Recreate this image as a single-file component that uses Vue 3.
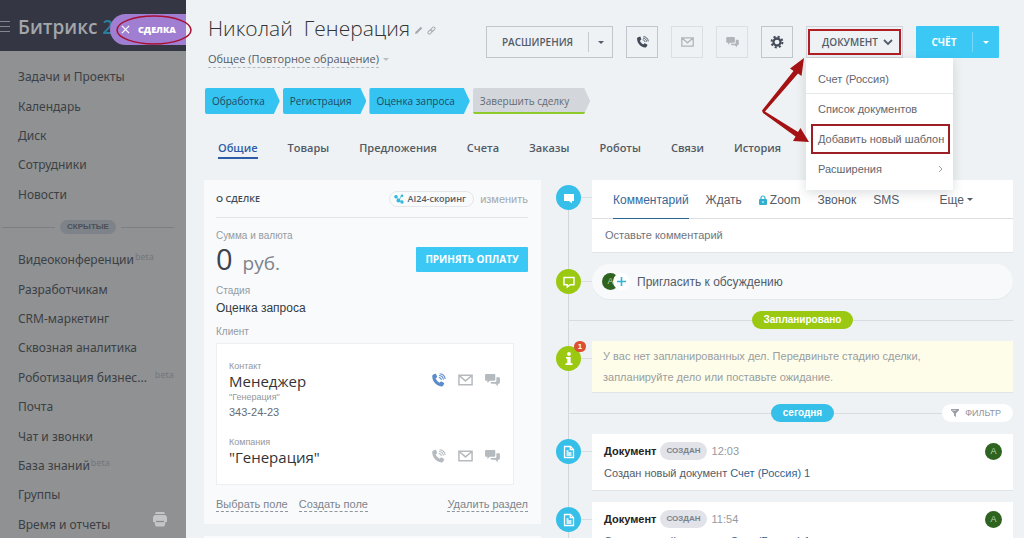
<script setup>
const menuTop = ['Задачи и Проекты', 'Календарь', 'Диск', 'Сотрудники', 'Новости']
const menuHidden = [
  { name: 'Видеоконференции', beta: true },
  { name: 'Разработчикам' },
  { name: 'CRM-маркетинг' },
  { name: 'Сквозная аналитика' },
  { name: 'Роботизация бизнес...', beta: true, wide: true },
  { name: 'Почта' },
  { name: 'Чат и звонки' },
  { name: 'База знаний', beta: true },
  { name: 'Группы' },
  { name: 'Время и отчеты' },
]
const stages = ['Обработка', 'Регистрация', 'Оценка запроса']
const tabs = ['Общие', 'Товары', 'Предложения', 'Счета', 'Заказы', 'Роботы', 'Связи', 'История']
const docs = ['12:03', '11:54']
</script>

<template>
  <svg class="defs" aria-hidden="true">
    <symbol id="i-phone" viewBox="0 0 16 16">
      <path d="M2.6 1.6 4.6 .8c.4-.1.8 0 .9.4l1 2.600c.1.4 0 .7-.3.900l-1.300 1c.7 2 2.200 3.700 4.100 4.700l1.200-1.200c.3-.3.600-.3 1-.1l2.500 1.300c.4.2.5.6.3 1l-1 1.900c-.4.700-1.100 1.100-1.900 1C5.500 13.600 1.400 8.900 1.300 3.500c0-.8.500-1.600 1.300-1.900z" fill="currentColor"/>
      <path d="M8.300 4.700c1.500.1 2.600 1.200 2.800 2.700M8.700 2.600c2.500.2 4.300 2.100 4.500 4.500M9.200.7c3.200.2 5.700 2.600 5.900 5.800" fill="none" stroke="currentColor" stroke-width="1.1"/>
    </symbol>
    <symbol id="i-mail" viewBox="0 0 16 12">
      <path d="M1 1h14v10H1zM1.500 1.500 8 7l6.500-5.500" fill="none" stroke="currentColor" stroke-width="1.600"/>
    </symbol>
    <symbol id="i-chat" viewBox="0 0 16 14">
      <path d="M1.200 0h8.600c.7 0 1.200.5 1.200 1.200v5c0 .7-.5 1.200-1.200 1.200H5L2.500 9.800V7.400H1.200C.5 7.400 0 6.900 0 6.200v-5C0 .5.500 0 1.200 0z" fill="currentColor"/>
      <path d="M12.200 3.600h2.600c.7 0 1.200.5 1.200 1.200v4.400c0 .7-.5 1.200-1.200 1.200h-1.100v2.800l-2.800-2.800H7.200c-.7 0-1.200-.5-1.200-1.200v-.600h5c.7 0 1.200-.5 1.200-1.200z" fill="currentColor"/>
    </symbol>
  </svg>

  <div class="page">
    <aside class="side">
      <header class="brand">
        <button class="burger" aria-label="Меню"><i></i><i></i><i></i></button>
        <span class="logo">Битрикс <b>24</b></span>
        <button class="deal-tab">
          <svg viewBox="0 0 10 10"><path d="M1 1l8 8M9 1 1 9" stroke="#fff" stroke-width="1.400"/></svg>
          <span>СДЕЛКА</span>
          <svg class="ring" viewBox="0 0 76 30"><ellipse cx="38" cy="15" rx="37" ry="14" fill="none" stroke="#a80f32" stroke-width="1.500"/></svg>
        </button>
      </header>
      <nav class="nav">
        <ul class="list five">
          <li v-for="m in menuTop" :key="m"><a href="#">{{ m }}</a></li>
        </ul>
        <div class="hidden-sep"><span>СКРЫТЫЕ</span></div>
        <ul class="list ten">
          <li v-for="m in menuHidden" :key="m.name">
            <a href="#">{{ m.name }}</a><sup v-if="m.beta" :class="{ wide: m.wide }">beta</sup>
          </li>
        </ul>
      </nav>
      <button class="print" aria-label="Печать">
        <svg viewBox="0 0 14 15"><path d="M3 0h8l1 2H2zM1.500 3h11L14 5v5h-1.500l-1 4.500h-9l-1-4.500H0V5z" fill="#c3c5c7"/><path d="M3 9.500h8" stroke="#8b8d90" stroke-width="1.300"/></svg>
      </button>
    </aside>

    <main class="main">
      <header class="top">
        <div class="heading">
          <h1>Николай&nbsp; Генерация
            <svg class="pen" viewBox="0 0 10 10"><path d="M1 9l.8-2.600L7.500.8l1.700 1.700-5.700 5.700z" fill="#a5abb0"/></svg>
            <svg class="chain" viewBox="0 0 10 10" fill="none" stroke="#a5abb0" stroke-width="1.100"><rect x="-2.700" y="-1.600" width="5.400" height="3.200" rx="1.600" transform="translate(6.600 3.400) rotate(-45)"/><rect x="-2.700" y="-1.600" width="5.400" height="3.200" rx="1.600" transform="translate(3.400 6.600) rotate(-45)"/></svg>
          </h1>
          <button class="funnel"><span>Общее (Повторное обращение)</span><i class="caret"></i></button>
        </div>
        <div class="actions">
          <div class="split">
            <button class="label">РАСШИРЕНИЯ</button>
            <button class="more" aria-label="Ещё"><i class="caret"></i></button>
          </div>
          <button class="sq" aria-label="Позвонить"><svg class="ic"><use href="#i-phone"/></svg></button>
          <button class="sq dim" aria-label="Письмо"><svg class="mail"><use href="#i-mail"/></svg></button>
          <button class="sq dim" aria-label="Чат"><svg class="chat"><use href="#i-chat"/></svg></button>
          <button class="sq" aria-label="Настройки">
            <svg class="gear" viewBox="-8 -8 16 16" fill="none" stroke="currentColor"><circle r="4" stroke-width="2.600"/><circle r="6.200" stroke-width="2.200" stroke-dasharray="2.435 2.435"/></svg>
          </button>
          <div class="doc">
            <button class="doc-btn">ДОКУМЕНТ
              <svg viewBox="0 0 10 7"><path d="M1 1l4 4 4-4" fill="none" stroke="currentColor" stroke-width="1.800"/></svg>
            </button>
            <div class="menu">
              <a href="#" class="lined">Счет (Россия)</a>
              <a href="#">Список документов</a>
              <a href="#" class="marked">Добавить новый шаблон</a>
              <a href="#" class="sub">Расширения
                <svg viewBox="0 0 5 8"><path d="M1 1l3 3-3 3" fill="none" stroke="#9aa0a6"/></svg>
              </a>
            </div>
            <svg class="arrows" viewBox="0 0 50 92">
              <path d="M1 54.500 32.500 15 29 12.500 43 2 40.500 20 37 17.500 4 55.500 37 76l2.500-4L48 86l-16-1 2.500-4.500L2 57z" fill="#a51214"/>
            </svg>
          </div>
          <div class="split blue">
            <button class="label">СЧЁТ</button>
            <button class="more" aria-label="Ещё"><i class="caret"></i></button>
          </div>
        </div>
      </header>

      <div class="stages">
        <button v-for="s in stages" :key="s" class="stage">{{ s }}</button>
        <button class="stage final">Завершить сделку</button>
      </div>

      <nav class="tabs">
        <a v-for="(t, i) in tabs" :key="t" href="#" :class="{ on: i === 0 }">{{ t }}</a>
      </nav>

      <div class="body">
        <div class="left">
          <section class="card about">
            <div class="about-head">
              <h2>О СДЕЛКЕ</h2>
              <button class="ai">
                <svg viewBox="0 0 10 10" fill="#2fb9dc"><path d="M2.500 3 4.500 7M4.500 7 8 7.500M7.500 1.500 4.500 7" stroke="#2fb9dc" stroke-width=".7"/><circle cx="2" cy="2.800" r="1.800"/><circle cx="4.500" cy="6.500" r="2"/><circle cx="8" cy="8" r="1.700"/><circle cx="8" cy="1.800" r="1.300"/></svg>
                AI24-скоринг
              </button>
              <button class="edit">изменить</button>
            </div>
            <div class="cap sum-cap">Сумма и валюта</div>
            <div class="sum">
              <span class="num">0</span><span class="cur">руб.</span>
              <button class="pay">ПРИНЯТЬ ОПЛАТУ</button>
            </div>
            <div class="cap stage-cap">Стадия</div>
            <div class="val">Оценка запроса</div>
            <div class="cap client-cap">Клиент</div>
            <div class="client">
              <div class="person">
                <div>
                  <div class="mini">Контакт</div>
                  <div class="name">Менеджер</div>
                  <div class="mini org">"Генерация"</div>
                  <div class="phone">343-24-23</div>
                </div>
                <div class="acts">
                  <button class="call" aria-label="Позвонить"><svg class="ic"><use href="#i-phone"/></svg></button>
                  <button aria-label="Письмо"><svg class="mail"><use href="#i-mail"/></svg></button>
                  <button aria-label="Чат"><svg class="chat"><use href="#i-chat"/></svg></button>
                </div>
              </div>
              <div class="person">
                <div>
                  <div class="mini">Компания</div>
                  <div class="name">"Генерация"</div>
                </div>
                <div class="acts">
                  <button aria-label="Позвонить"><svg class="ic"><use href="#i-phone"/></svg></button>
                  <button aria-label="Письмо"><svg class="mail"><use href="#i-mail"/></svg></button>
                  <button aria-label="Чат"><svg class="chat"><use href="#i-chat"/></svg></button>
                </div>
              </div>
            </div>
            <div class="foot">
              <a href="#">Выбрать поле</a><a href="#">Создать поле</a><a href="#" class="end">Удалить раздел</a>
            </div>
          </section>
          <section class="card next"></section>
        </div>

        <div class="timeline">
          <div class="row">
            <span class="dot"><svg viewBox="0 0 12 12"><path d="M1 2h10v7H9v2.500L6 9H1z" fill="#fff"/></svg></span>
            <section class="box editor">
              <div class="etabs">
                <a href="#" class="on">Комментарий</a>
                <a href="#">Ждать</a>
                <a href="#"><svg viewBox="0 0 8 10"><path d="M2 5V3a2 2 0 0 1 4 0v2" fill="none" stroke="#30b0cf" stroke-width="1.200"/><rect y="4" width="8" height="6" rx="1" fill="#30b0cf"/><path d="M4 6v2" stroke="#fff"/></svg>Zoom</a>
                <a href="#">Звонок</a>
                <a href="#">SMS</a>
                <a href="#" class="last">Еще<i class="caret"></i></a>
              </div>
              <input class="comment" type="text" placeholder="Оставьте комментарий" aria-label="Комментарий">
            </section>
          </div>
          <div class="row">
            <span class="dot green"><svg viewBox="0 0 12 12"><path d="M1 1.500h10v7.300H7L4.300 11V8.800H1z" fill="none" stroke="#fff" stroke-width="1.400"/></svg></span>
            <button class="invite">
              <span class="ava">A</span>
              <span class="plus"><svg viewBox="0 0 10 10"><path d="M5 0v10M0 5h10" stroke="#30b4d8" stroke-width="1.800"/></svg></span>
              Пригласить к обсуждению
            </button>
          </div>
          <div class="sep"><span class="pill green">Запланировано</span></div>
          <div class="row">
            <span class="dot green">
              <svg viewBox="0 0 12 14" class="info"><circle cx="6" cy="1.900" r="1.900" fill="#fff"/><path d="M3 5h4.700v6.300H9.500V13h-7v-1.700h1.800V6.700H3z" fill="#fff"/></svg>
              <em>1</em>
            </span>
            <section class="box warn">У вас нет запланированных дел. Передвиньте стадию сделки, запланируйте дело или поставьте ожидание.</section>
          </div>
          <div class="sep">
            <span class="pill">сегодня</span>
            <button class="filter"><svg viewBox="0 0 9 9"><path d="M0 0h9v1.300L5.500 5v4L3.500 7.500V5L0 1.300z" fill="#959ca4"/><path d="M1.500 1.500h4" stroke="#fff" stroke-width=".7"/></svg>ФИЛЬТР</button>
          </div>
          <div v-for="d in docs" :key="d" class="row">
            <span class="dot"><svg viewBox="0 0 12 12" fill="none" stroke="#fff" stroke-width="1.300"><path d="M1.500 .5h6L10.500 3.500v8h-9zM7.300 .5v3.200h3.200M3.500 5h2M3.500 7h5M3.500 9h5"/></svg></span>
            <section class="box entry">
              <div class="entry-head">
                <b>Документ</b><span class="tag">СОЗДАН</span><time>{{ d }}</time><span class="ava">A</span>
              </div>
              <p>Создан новый документ <a href="#">Счет (Россия) 1</a></p>
            </section>
          </div>
        </div>
      </div>
    </main>
  </div>
</template>

<style>
body { overflow: hidden; background: #eef2f4; }
</style>

<style scoped>
* { box-sizing: border-box; }
button { font: inherit; color: inherit; background: none; border: 0; padding: 0; margin: 0; cursor: pointer; }
a { color: inherit; text-decoration: none; }
ul, h1, h2, p { margin: 0; padding: 0; list-style: none; font-weight: 400; }
svg { display: block; flex: none; overflow: visible; }
.defs { position: absolute; width: 0; height: 0; }
.page { display: flex; height: 100vh; overflow: hidden; font-family: "Liberation Sans", Arial, sans-serif; font-size: 12px; color: #535c69; }
.caret { display: inline-block; border: 3px solid transparent; border-top-color: currentColor; border-bottom: 0; }
.ic { width: 15px; height: 15px; }
.mail { width: 15px; height: 12px; }
.chat { width: 15px; height: 13px; }

.side { position: relative; z-index: 2; flex: none; width: 186px; background: #8f9193; color: #3c3f44; font-family: "Open Sans", sans-serif; }
.brand { display: flex; align-items: center; height: 51px; background: #343743; padding-top: 2px; }
.burger { width: 10px; display: grid; gap: 4px; }
.burger i { height: 1px; background: #83868d; }
.logo { margin-left: 8px; font-size: 19px; line-height: 26px; font-weight: 600; color: #a2a5aa; white-space: nowrap; }
.logo b { color: #2a7f9b; font-weight: 600; }
.deal-tab { position: absolute; right: 0; top: 14px; display: flex; align-items: center; gap: 8px; width: 76px; height: 31px; padding-left: 11px; border-radius: 16px 0 0 16px; background: #a07fd2; color: #fff; font-size: 9px; font-weight: 800; }
.deal-tab svg { width: 9px; height: 9px; }
.deal-tab .ring { position: absolute; left: 6px; top: 1px; width: 76px; height: 30px; }
.nav { padding-top: 11px; }
.list { display: grid; grid-auto-rows: 1fr; padding-left: 18px; font-family: "Noto Sans", sans-serif; font-size: 12px; }
.five { height: 147px; }
.ten { height: 294px; }
.list li { display: flex; align-items: center; white-space: nowrap; }
.list sup { align-self: flex-start; font-size: 9px; line-height: 14px; margin: 5px 0 0 1px; color: #74777b; }
.list sup.wide { margin-left: 8px; }
.hidden-sep { display: flex; align-items: center; gap: 5px; height: 36px; padding: 0 12px 0 2px; }
.hidden-sep::before, .hidden-sep::after { content: ""; flex: 1; height: 1px; background: #7b7e82; }
.hidden-sep span { padding: 0 7px; border-radius: 7px; background: #7e8389; font: 700 8px/14px "Liberation Sans", sans-serif; color: #4b4f57; }
.print { position: absolute; left: 153px; bottom: 11px; }
.print svg { width: 14px; height: 15px; }

.main { flex: 1; min-width: 0; background: #eef2f4; }
.top { display: flex; justify-content: space-between; height: 88px; padding: 14px 25px 0 22px; }
.heading { white-space: nowrap; font-family: "Open Sans", sans-serif; }
h1 { display: flex; align-items: center; font-size: 21px; line-height: 28px; font-weight: 300; color: #333; }
h1 svg { width: 9px; height: 9px; margin: 4px 0 0 4px; }
.funnel { display: flex; align-items: center; gap: 4px; margin-top: 8px; font-size: 11px; line-height: 17px; }
.funnel span { border-bottom: 1px dashed #b5babf; }
.funnel .caret { color: #b9bec3; }
.actions { display: flex; gap: 13px; margin-top: 12px; height: 32px; font: 600 10px/30px "Open Sans", sans-serif; }
.split { display: flex; align-items: center; width: 127px; border: 1px solid #c1c6ca; }
.split .label { flex: 1; line-height: 30px; }
.split .more { width: 24px; height: 20px; border-left: 1px solid #c6cbcf; display: grid; place-items: center; }
.split.blue { width: 83px; border: 0; border-radius: 1px; background: #3bc8f5; color: #fff; font-weight: 700; }
.split.blue .more { width: 27px; border-color: #74dafa; }
.sq { width: 32px; border: 1px solid #c1c6ca; display: grid; place-items: center; color: #424b57; }
.sq.dim { border-color: #dcdfe2; color: #b0b5ba; }
.sq .mail { width: 13px; height: 10px; }
.sq .chat { width: 13px; height: 11px; }
.sq .ic { width: 13px; height: 13px; }
.gear { width: 14px; height: 14px; }
.doc { position: relative; z-index: 3; width: 97px; }
.doc-btn { position: relative; display: flex; align-items: center; justify-content: center; gap: 5px; width: 100%; height: 32px; padding-left: 6px; border: 1px solid #d0d4d8; }
.doc-btn svg { width: 10px; height: 7px; }
.doc-btn::after { content: ""; position: absolute; inset: 2px 1px; border: 2px solid #b11e23; }
.menu { position: absolute; top: 32px; left: 0; width: 147px; padding: 6px 0; background: #fff; box-shadow: 0 3px 10px rgba(80, 90, 100, .2); font: 11px/30px "Liberation Sans", sans-serif; color: #5f666f; }
.menu a { position: relative; display: flex; align-items: center; justify-content: space-between; height: 30px; padding: 0 10px 0 12px; white-space: nowrap; }
.menu .lined { border-bottom: 1px solid #e5e8ea; }
.menu .marked::after { content: ""; position: absolute; inset: 0 3px 0 5px; border: 2px solid #9c1f26; }
.menu .sub svg { width: 5px; height: 8px; }
.arrows { position: absolute; left: -45px; top: 30px; width: 50px; height: 92px; }

.stages { display: flex; gap: 3px; padding-left: 19px; font: 500 10px/26px "Open Sans", sans-serif; color: #1d4b62; }
.stage { height: 26px; padding: 0 15px 0 7px; background: #35c3f1; border-radius: 2px; clip-path: polygon(0 0, calc(100% - 6px) 0, 100% 50%, calc(100% - 6px) 100%, 0 100%); }
.stage.final { padding-right: 21px; background: linear-gradient(#d3d6da 0 24px, #8fca2b 24px); color: #646b74; }
.tabs { display: flex; gap: 30px; padding: 23px 0 0 32px; font: 600 11px/21px "Open Sans", sans-serif; color: #525a65; }
.tabs a { height: 22px; }
.tabs .on { color: #2d5ca8; border-bottom: 2px solid #2d5ca8; }

.body { display: grid; grid-template-columns: 337fr 457fr; gap: 15px; padding: 21px 11px 0 18px; }
.card { background: #f9fafb; }
.left { display: grid; gap: 12px; align-content: start; }
.next { height: 120px; }
.about { padding: 0 13px 12px 12px; }
.about-head { display: flex; align-items: center; height: 38px; border-bottom: 1px solid #e2e5e8; }
h2 { flex: 1; font: 600 9px/16px "Open Sans", sans-serif; color: #414852; }
.ai { display: flex; align-items: center; gap: 4px; height: 16px; padding: 0 7px 0 4px; border: 1px solid #e3e7ea; border-radius: 8px; font: 600 9px/14px "Open Sans", sans-serif; }
.ai svg { width: 10px; height: 10px; }
.edit { margin-left: 6px; font-size: 11px; color: #a3a8ae; }
.cap { font-size: 10px; line-height: 14px; color: #949ba3; }
.sum-cap { padding-top: 11px; }
.sum { display: flex; align-items: baseline; height: 40px; font-family: "Open Sans", sans-serif; color: #3c434d; line-height: 32px; }
.num { font-size: 29px; }
.cur { margin-left: 10px; font-size: 19px; color: #7b828b; }
.pay { align-self: flex-start; margin: 4px 0 0 auto; width: 112px; height: 25px; border-radius: 1px; background: #3bc8f5; color: #fff; font-size: 10px; line-height: 25px; font-weight: 700; }
.stage-cap { padding-top: 1px; }
.val { margin: 2px 0 9px; font-size: 12px; line-height: 16px; color: #333a43; }
.client { margin: 4px 14px 0 0; height: 142px; padding: 16px 13px 0 12px; background: #fff; border: 1px solid #edf0f2; }
.person { display: flex; justify-content: space-between; }
.person + .person { margin-top: 16px; }
.mini { font-size: 9px; line-height: 12px; color: #9298a0; }
.name { font: 15px/18px "Open Sans", sans-serif; color: #333; }
.org { line-height: 14px; }
.phone { font-size: 11px; line-height: 16px; color: #666d76; }
.acts { display: flex; gap: 12px; height: 16px; margin-top: 12px; align-items: center; color: #b5babf; }
.acts .call { color: #5a8ccb; }
.foot { display: flex; gap: 11px; margin-top: 13px; font-size: 11px; line-height: 13px; color: #7d848c; }
.foot a { border-bottom: 1px dashed #8f959c; }
.foot .end { margin-left: auto; }

.timeline { position: relative; display: grid; gap: 12px; align-content: start; }
.timeline::before { content: ""; position: absolute; left: 12px; top: 12px; bottom: 0; width: 1px; background: #d3d7db; }
.row { position: relative; display: grid; grid-template-columns: 36px minmax(0, 1fr); align-items: start; }
.row::before { content: ""; position: absolute; left: 25px; top: 17px; width: 11px; height: 1px; background: #d9dde0; }
.dot { position: relative; display: grid; place-items: center; width: 25px; height: 25px; margin-top: 5px; border-radius: 50%; background: #36bfe8; }
.dot svg { width: 12px; height: 12px; }
.dot .info { width: 12px; height: 14px; }
.dot.green { background: #9bc810; }
.dot em { position: absolute; top: -5px; right: -5px; width: 12px; height: 11px; border-radius: 6px; background: #dc4f31; color: #fff; font: 700 8px/11px "Liberation Sans", sans-serif; text-align: center; }
.box { background: #fff; box-shadow: 0 1px 0 #e2e5e8; }
.editor { height: 72px; }
.etabs { display: flex; gap: 17px; height: 39px; padding: 0 40px 0 21px; border-bottom: 1px solid #dcdfe2; line-height: 40px; }
.etabs a { display: flex; align-items: center; gap: 3px; height: 39px; }
.etabs svg { width: 8px; height: 10px; }
.etabs .on { color: #35699b; box-shadow: inset 0 -1px 0 #2a668d; }
.etabs .last { margin-left: auto; }
.comment { display: block; width: 100%; height: 31px; padding: 0 13px; border: 0; background: none; font: 11px/30px "Liberation Sans", sans-serif; }
.comment::placeholder { color: #6f757d; opacity: 1; }
.invite { display: flex; align-items: center; height: 35px; padding-left: 10px; border-radius: 18px; background: #f7f9fa; box-shadow: 0 1px 0 #e4e8ea; font-size: 12px; }
.ava { display: grid; place-items: center; width: 17px; height: 17px; border-radius: 50%; background: #2f6420; color: #b6d6a6; font: 9px/17px "Liberation Sans", sans-serif; }
.plus { display: grid; place-items: center; width: 17px; height: 17px; margin: 0 7px 0 -6px; border-radius: 50%; background: #fff; }
.plus svg { width: 9px; height: 9px; }
.sep { position: relative; display: flex; justify-content: center; height: 18px; padding-left: 36px; }
.sep::before { content: ""; position: absolute; left: 13px; right: 0; top: 9px; height: 1px; background: #d8dce0; }
.pill { position: relative; padding: 0 12px; border-radius: 9px; background: #36bfe8; color: #fff; font-size: 10px; line-height: 18px; font-weight: 700; }
.pill.green { background: #9bc810; }
.filter { position: absolute; right: 0; top: 0; display: flex; align-items: center; gap: 6px; height: 18px; padding: 0 12px 0 9px; border-radius: 9px; background: #fff; font-size: 9px; color: #8e959d; }
.filter svg { width: 8px; height: 8px; }
.warn { padding: 5px 90px 4px 11px; background: #fefdea; font-size: 11px; line-height: 21px; color: #9a9e9f; }
.entry { height: 56px; padding: 8px 11px 0 12px; }
.entry-head { display: flex; align-items: center; height: 18px; }
.entry-head b { color: #222; font-size: 11px; }
.tag { margin: 0 5px 0 4px; padding: 0 6px; border-radius: 9px; background: #e1e3e8; font: 700 8px/18px "Liberation Sans", sans-serif; color: #7a818c; }
.entry-head time { color: #949aa1; font-size: 11px; }
.entry-head .ava { margin-left: auto; }
.entry p { margin-top: 5px; font-size: 11px; line-height: 16px; }
.entry p a { color: #33638c; }
</style>
